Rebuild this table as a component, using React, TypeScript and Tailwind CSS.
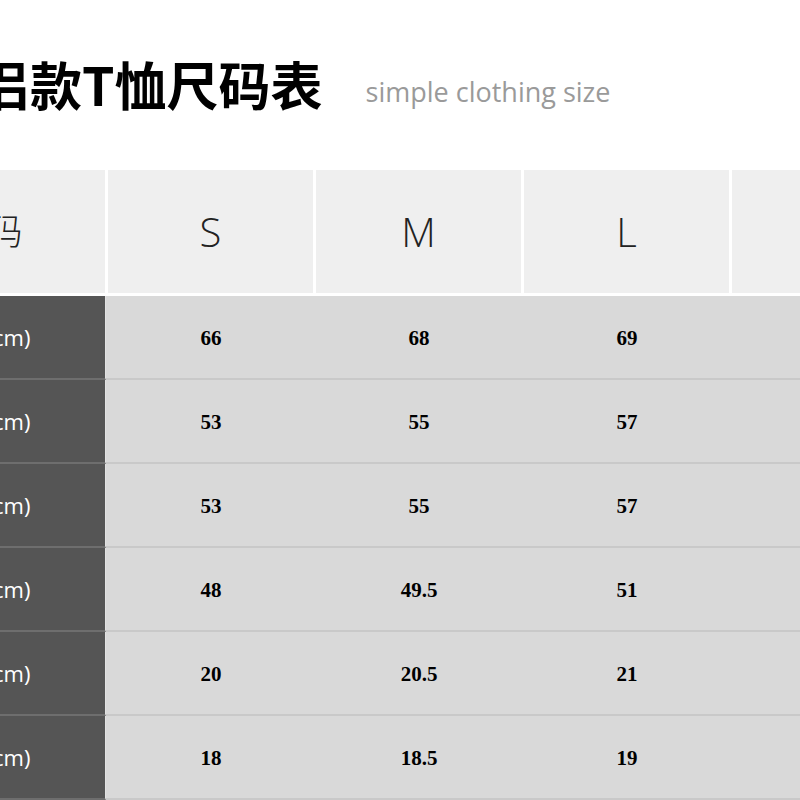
import React from 'react';

const sizes = ['S', 'M', 'L', 'XL'];

const rows: [string, string[]][] = [
  ['衣长(cm)', ['66', '68', '69', '71']],
  ['胸围(cm)', ['53', '55', '57', '59']],
  ['下摆(cm)', ['53', '55', '57', '59']],
  ['肩宽(cm)', ['48', '49.5', '51', '52.5']],
  ['袖长(cm)', ['20', '20.5', '21', '21.5']],
  ['袖口(cm)', ['18', '18.5', '19', '19.5']],
];

const sans = "font-['Open_Sans','Noto_Sans_CJK_SC',sans-serif]";

export default function App() {
  return (
    <div className="w-[800px] h-[800px] overflow-hidden bg-white">
      <div className="ml-[-132px] w-[1100px]">
        {/* Title */}
        <div className="h-[170px] pt-[52px] pl-[58px] flex items-baseline">
          <h1 className="text-[52px] leading-[64px] font-bold text-black font-['Noto_Sans_CJK_SC',sans-serif]">
            情侣款T恤尺码表
          </h1>
          <span className={`ml-[43px] relative top-[-4px] text-[27px] text-[#9a9a9a] ${sans}`}>simple clothing size</span>
        </div>

        {/* Header row */}
        <div className="flex gap-[3px] h-[123px]">
          <div className={`w-[237px] shrink-0 bg-[#efefef] flex items-center justify-center text-[36px] font-light text-[#222] ${sans}`}>
            尺码
          </div>
          {sizes.map((s) => (
            <div
              key={s}
              className={`w-[205px] shrink-0 bg-[#efefef] flex items-center justify-center text-[40px] font-light text-[#222] ${sans}`}
            >
              {s}
            </div>
          ))}
        </div>

        {/* Body */}
        <div className="mt-[3px]">
          {rows.map(([label, vals]) => (
            <div key={label} className="flex h-[84px]">
              <div className={`w-[238px] shrink-0 bg-[#555555] border-b-2 border-[#6e6e6e] border-r border-r-[#e2e2e2] flex items-center justify-center text-white text-[22px] ${sans}`}>
                {label}
              </div>
              {vals.map((v, i) => (
                <div
                  key={i}
                  className="w-[208px] shrink-0 bg-[#d9d9d9] border-b-2 border-[#c9c9c9] flex items-center justify-center pl-[2px] pt-[3px] text-[21px] font-bold text-black font-['Liberation_Serif',serif]"
                >
                  {v}
                </div>
              ))}
            </div>
          ))}
        </div>
      </div>
    </div>
  );
}
